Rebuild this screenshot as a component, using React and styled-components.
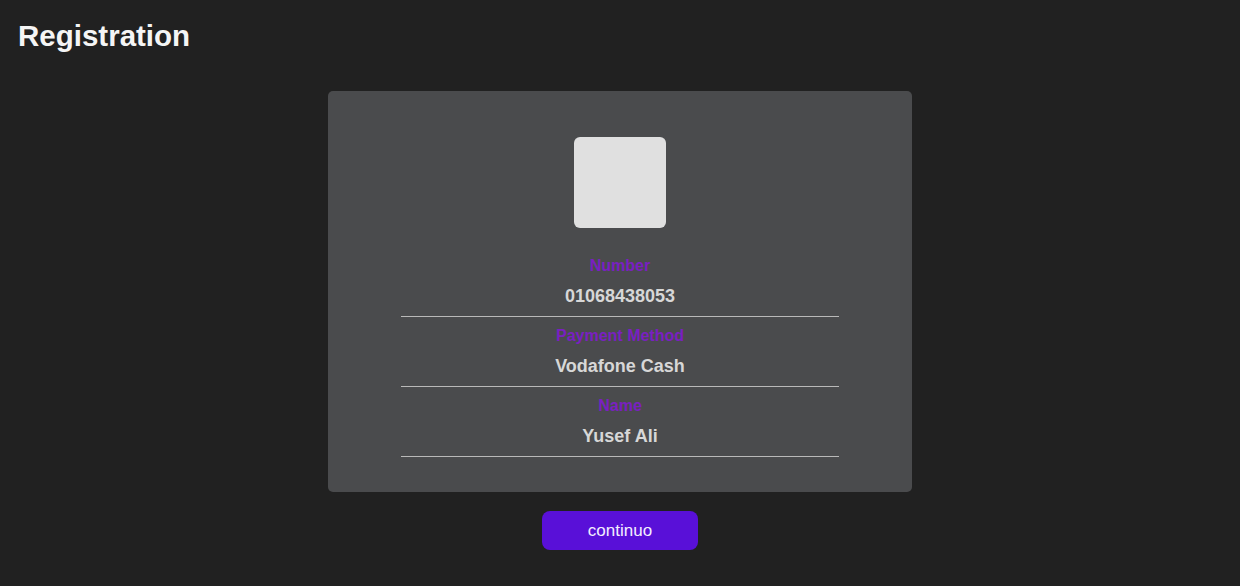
import React from "react";
import styled, { createGlobalStyle } from "styled-components";

const GlobalStyle = createGlobalStyle`
  html, body {
    margin: 0;
    padding: 0;
    background-color: #212121;
    font-family: "Liberation Sans", Arial, sans-serif;
  }
`;

const fields = [
  { label: "Number", value: "01068438053" },
  { label: "Payment Method", value: "Vodafone Cash" },
  { label: "Name", value: "Yusef Ali" },
];

const App = () => {
  return (
    <Page>
      <GlobalStyle />
      <Title>Registration</Title>
      <Main>
        <Card>
          <Avatar />
          <Fields>
            {fields.map((item) => (
              <Field key={item.label}>
                <Label>{item.label}</Label>
                <Value>{item.value}</Value>
              </Field>
            ))}
          </Fields>
        </Card>
        <Button>continuo</Button>
      </Main>
    </Page>
  );
};

export default App;

export const Page = styled.div`
  min-height: 586px;
  background-color: #212121;
`;

export const Title = styled.h1`
  margin: 0;
  padding: 19px 18px 0;
  font-size: 29.5px;
  font-weight: bold;
  color: #f5f5f5;
  line-height: 33px;
`;

export const Main = styled.div`
  margin-top: 39px;
  display: flex;
  flex-direction: column;
  align-items: center;
`;

export const Card = styled.div`
  width: 584px;
  height: 401px;
  box-sizing: border-box;
  padding-top: 46px;
  background-color: #4a4b4d;
  border-radius: 5px;
  display: flex;
  flex-direction: column;
  align-items: center;
`;

export const Avatar = styled.div`
  width: 92px;
  height: 91px;
  background-color: #e0e0e0;
  border-radius: 6px;
`;

export const Fields = styled.div`
  margin-top: 19px;
  width: 438px;
  display: flex;
  flex-direction: column;
`;

export const Field = styled.div`
  padding: 9px 0 10px;
  border-bottom: 1px solid #b9b9b9;
  text-align: center;
`;

export const Label = styled.div`
  font-size: 16px;
  font-weight: bold;
  line-height: 20px;
  color: #7a1fc2;
  margin-bottom: 10px;
`;

export const Value = styled.div`
  font-size: 18px;
  font-weight: bold;
  line-height: 20px;
  color: #d7d7d7;
`;

export const Button = styled.button`
  margin-top: 19px;
  width: 156px;
  height: 39px;
  border: none;
  border-radius: 8px;
  background-color: #5910d8;
  color: #f4eeff;
  font-family: "Liberation Sans", Arial, sans-serif;
  font-size: 17px;
  cursor: pointer;
`;
